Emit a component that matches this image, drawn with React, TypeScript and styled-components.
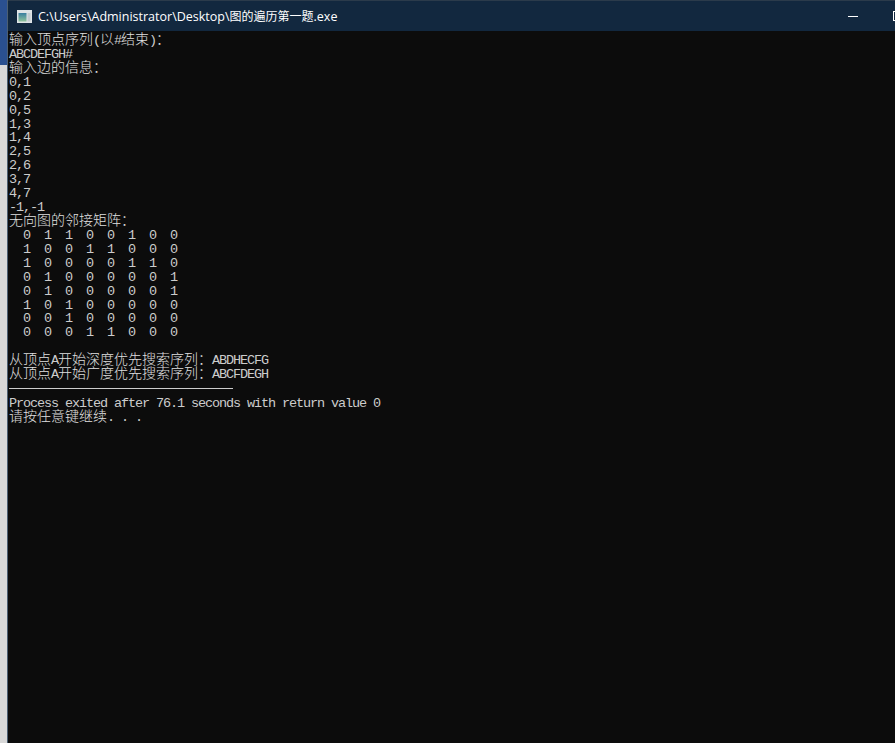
import { Fragment } from 'react'
import styled, { createGlobalStyle } from 'styled-components'

const EDGES = ['0,1', '0,2', '0,5', '1,3', '1,4', '2,5', '2,6', '3,7', '4,7', '-1,-1']

const MATRIX = [
  [0, 1, 1, 0, 0, 1, 0, 0],
  [1, 0, 0, 1, 1, 0, 0, 0],
  [1, 0, 0, 0, 0, 1, 1, 0],
  [0, 1, 0, 0, 0, 0, 0, 1],
  [0, 1, 0, 0, 0, 0, 0, 1],
  [1, 0, 1, 0, 0, 0, 0, 0],
  [0, 0, 1, 0, 0, 0, 0, 0],
  [0, 0, 0, 1, 1, 0, 0, 0],
]

const GlobalStyle = createGlobalStyle`
  html, body, #root {
    margin: 0;
    height: 100%;
  }
`

const Desktop = styled.div`
  display: flex;
  width: 895px;
  height: 743px;
  overflow: hidden;
  background: #d6d6d6;
`

const Strip = styled.div`
  flex: 0 0 7px;
  display: flex;
  flex-direction: column;
`

const StripAccent = styled.div`
  height: 65px;
  background: #2a5090;
`

const StripRest = styled.div`
  flex: 1;
  background: #d8d8d8;
`

const Window = styled.div`
  flex: 1;
  min-width: 0;
  display: flex;
  flex-direction: column;
  border-left: 1px solid #4c5f72;
`

const TitleBar = styled.div`
  flex: 0 0 31px;
  box-sizing: border-box;
  display: flex;
  align-items: center;
  padding-left: 9px;
  border-top: 1px solid #2b3b4b;
  background: #12283f;
  color: #ffffff;
  font-family: 'Open Sans', 'Noto Sans CJK SC', sans-serif;
  font-size: 12.5px;
  white-space: nowrap;
`

const AppIcon = styled.svg`
  flex: 0 0 auto;
  width: 15px;
  height: 13px;
  margin-right: 6px;
`

const Title = styled.span`
  flex: 1;
`

const TitleHan = styled.span`
  font-size: 12px;
`

const Controls = styled.div`
  display: flex;
  align-items: center;
  gap: 35px;
  margin-right: -8px;
`

const Minimize = styled.span`
  width: 10px;
  height: 1px;
  background: #ffffff;
`

const Maximize = styled.span`
  box-sizing: border-box;
  width: 10px;
  height: 10px;
  border: 1px solid #ffffff;
`

const Console = styled.div`
  flex: 1;
  padding: 3px 0 0 1px;
  background: #0c0c0c;
  color: #cccccc;
  font-family: 'Liberation Mono', monospace;
  font-size: 13.5px;
  letter-spacing: -1.1px;
`

const Line = styled.div`
  height: 13.93px;
  line-height: 13.93px;
  white-space: pre;
`

const Han = styled.span`
  font-family: 'Noto Sans CJK SC', sans-serif;
  font-size: 14px;
  font-weight: 300;
  line-height: 0;
  letter-spacing: 0;
  color: #e0e0e0;
`

const Rule = styled.div`
  width: 224px;
  height: 1px;
  margin: 6px 0 7.93px;
  background: #cccccc;
`

const cell = (n: number) => `  ${n}`

export default function App() {
  return (
    <Fragment>
      <GlobalStyle />
      <Desktop>
        <Strip>
          <StripAccent />
          <StripRest />
        </Strip>
        <Window>
          <TitleBar>
            <AppIcon viewBox="0 0 15 13">
              <defs>
                <linearGradient id="panel" x1="0" y1="0" x2="0" y2="1">
                  <stop offset="0" stopColor="#3b7fa0" />
                  <stop offset="1" stopColor="#8fc39a" />
                </linearGradient>
              </defs>
              <rect width="15" height="13" fill="#dfe4e6" />
              <rect x="1.5" y="3" width="8" height="8.5" fill="url(#panel)" />
              <rect x="10.5" y="3" width="3" height="8.5" fill="#c4ccd0" />
            </AppIcon>
            <Title>C:\Users\Administrator\Desktop\<TitleHan>图的遍历第一题</TitleHan>.exe</Title>
            <Controls>
              <Minimize />
              <Maximize />
            </Controls>
          </TitleBar>
          <Console>
            <Line><Han>输入顶点序列</Han>(<Han>以</Han>#<Han>结束</Han>)<Han>：</Han></Line>
            <Line>ABCDEFGH#</Line>
            <Line><Han>输入边的信息：</Han></Line>
            {EDGES.map((e) => (
              <Line key={e}>{e}</Line>
            ))}
            <Line><Han>无向图的邻接矩阵：</Han></Line>
            {MATRIX.map((row, i) => (
              <Line key={i}>{row.map(cell).join('')}</Line>
            ))}
            <Line />
            <Line><Han>从顶点</Han>A<Han>开始深度优先搜索序列：</Han>ABDHECFG</Line>
            <Line><Han>从顶点</Han>A<Han>开始广度优先搜索序列：</Han>ABCFDEGH</Line>
            <Rule />
            <Line>Process exited after 76.1 seconds with return value 0</Line>
            <Line><Han>请按任意键继续</Han>. . .</Line>
          </Console>
        </Window>
      </Desktop>
    </Fragment>
  )
}
